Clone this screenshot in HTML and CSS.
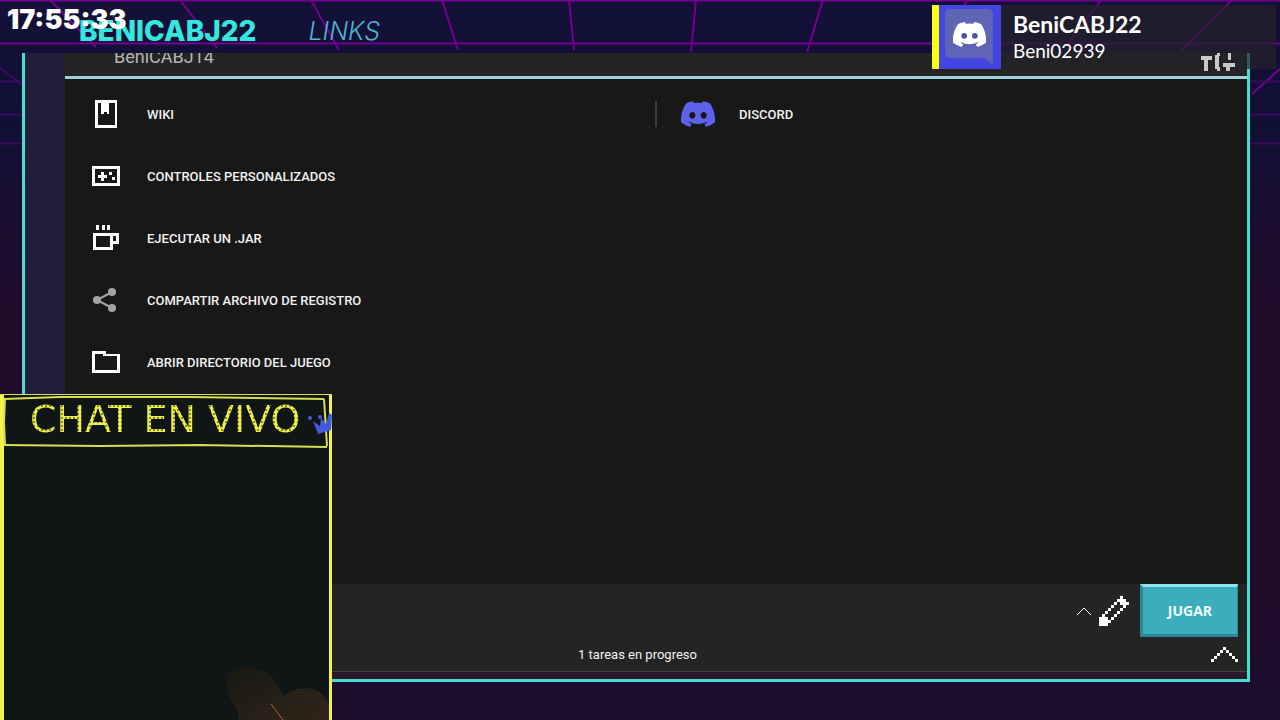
FILE: index.html
```html
<!DOCTYPE html>
<html lang="es">
<head>
    <meta charset="UTF-8">
    <meta name="viewport" content="width=device-width, initial-scale=1.0">
    <title>BeniCABJ22</title>
    <link rel="stylesheet" href="styles.css">
</head>
<body>
    <svg class="grid-lines" viewBox="0 0 1280 720" preserveAspectRatio="none" aria-hidden="true">
        <g class="grid-near">
            <path d="M0 0.5H1280M0 43.5H1280"/>
            <path d="M50 0L96 47M180 0L217 48M311 0L339 50M442 0L458 50M569 0L574 50M696 0L691 52M823 0L807 52M968 0L945 30M1101 0L1066 46M1232 0L1181 51"/>
            <path d="M1252 94L1280 69"/>
        </g>
        <g class="grid-far">
            <path d="M0 81.5H24M0 114.5H24M0 143.5H24M0 68L24 86M1248 81.5H1280M1248 114.5H1280M1248 143.5H1280"/>
        </g>
    </svg>

    <header class="topbar">
        <span class="brand">BENICABJ22</span>
        <a class="links" href="#">LINKS</a>
        <time class="clock">17:55:33</time>
    </header>

    <main class="frame">
        <div class="side"></div>
        <div class="launcher">
            <div class="account">
                <span class="account-name">BeniCABJ14</span>
                <button class="icon-button settings" type="button" aria-label="Ajustes">
                    <svg width="36" height="20" viewBox="0 0 36 20" fill="#c8c8c8">
                        <path d="M1 3h11v4h-4v11h-4v-11h-3zM15 2h2v-2h3v3h-1v11h1v4h-3v-2h-2zM28 0h3v7h-3zM23 10h12v4h-5v4h-4v-4h-3z"/>
                    </svg>
                </button>
            </div>

            <nav class="menu">
                <div class="menu-column">
                    <a class="menu-item" href="#">
                        <svg width="28" height="28" viewBox="0 0 28 28" fill="#fff">
                            <path fill-rule="evenodd" d="M3 0h22v28H3zM6 3v22h17V3h-6v11h-2v-2h-3v2H9V3z"/>
                        </svg>
                        WIKI
                    </a>
                    <a class="menu-item" href="#">
                        <svg width="28" height="28" viewBox="0 0 28 28" fill="#fff">
                            <path fill-rule="evenodd" d="M0 4h28v20H0zM3 7v14h22V7z"/>
                            <path d="M9 10h3v3h3v3h-3v3H9v-3H6v-3h3zM17 10h3v3h-3zM20 15h3v3h-3z"/>
                        </svg>
                        CONTROLES PERSONALIZADOS
                    </a>
                    <a class="menu-item" href="#">
                        <svg width="28" height="28" viewBox="0 0 28 28" fill="#fff">
                            <path d="M4 1h3v5H4zM10 1h3v5h-3zM15 1h3v5h-3z"/>
                            <path fill-rule="evenodd" d="M1 9h26v11h-6v6H1zM4 12v11h14V12zM21 12v5h3v-5z"/>
                        </svg>
                        EJECUTAR UN .JAR
                    </a>
                    <a class="menu-item" href="#">
                        <svg width="28" height="28" viewBox="0 0 28 28" fill="#a3a3a3">
                            <path d="M20 6L5 14L20 22" fill="none" stroke="#a3a3a3" stroke-width="2"/>
                            <circle cx="20" cy="6" r="4"/>
                            <circle cx="5" cy="14" r="4"/>
                            <circle cx="20" cy="22" r="4"/>
                        </svg>
                        COMPARTIR ARCHIVO DE REGISTRO
                    </a>
                    <a class="menu-item" href="#">
                        <svg width="28" height="28" viewBox="0 0 28 28" fill="#fff">
                            <path fill-rule="evenodd" d="M0 3h14v3h14v19H0zM3 6v16h22V8H11V6z"/>
                        </svg>
                        ABRIR DIRECTORIO DEL JUEGO
                    </a>
                </div>
                <div class="menu-column second">
                    <a class="menu-item" href="#">
                        <svg width="34" height="26" viewBox="0 0 127 96" fill="#5d62ea">
                            <path d="M107.7 8.1A105 105 0 0 0 81.5 0a72 72 0 0 0-3.4 6.8 97.7 97.7 0 0 0-29.1 0A72 72 0 0 0 45.6 0 105.9 105.9 0 0 0 19.4 8.1C2.8 32.7-1.7 56.6.5 80.2a105.7 105.7 0 0 0 32.2 16.2 77.7 77.7 0 0 0 6.9-11.2 68.4 68.4 0 0 1-10.9-5.2c.9-.7 1.8-1.4 2.7-2a75.6 75.6 0 0 0 64.3 0c.9.7 1.8 1.4 2.7 2a68.7 68.7 0 0 1-10.9 5.2 77 77 0 0 0 6.9 11.2 105.3 105.3 0 0 0 32.2-16.2c2.6-27.3-4.6-51-18.9-72.1zM42.5 65.7c-6.3 0-11.5-5.7-11.5-12.7s5-12.7 11.5-12.7S54 46 53.9 53s-5.1 12.7-11.4 12.7zm42.2 0c-6.3 0-11.4-5.7-11.4-12.7s5-12.7 11.4-12.7S96.3 46 96.2 53s-5.1 12.7-11.5 12.7z"/>
                        </svg>
                        DISCORD
                    </a>
                </div>
            </nav>

            <footer class="bottom">
                <div class="actions">
                    <button class="icon-button" type="button" aria-label="Elegir perfil">
                        <svg width="14" height="10" viewBox="0 0 14 10" fill="none" stroke="#fff">
                            <path d="M0 9L7 2L14 9"/>
                        </svg>
                    </button>
                    <button class="icon-button" type="button" aria-label="Editar perfil">
                        <svg width="30" height="30" viewBox="0 0 10 10" fill="#fff" shape-rendering="crispEdges">
                            <path d="M0 7h3v1h1v1H3v1H0zM1 6h1v1H1zM2 5h1v1H2zM3 4h1v1H3zM4 3h1v1H4zM5 2h1v1H5z"/>
                            <path d="M4 7h1v1H4zM5 6h1v1H5zM6 5h1v1H6zM7 4h1v1H7z"/>
                            <path d="M6 1h1V0h1v1h1v1h1v1H9v1H8V3H7V2H6z"/>
                        </svg>
                    </button>
                    <button class="play" type="button">JUGAR</button>
                </div>
                <div class="progress">
                    <span>1 tareas en progreso</span>
                    <button class="icon-button expand" type="button" aria-label="Ver tareas">
                        <svg width="27" height="15" viewBox="0 0 9 5" fill="#fff" shape-rendering="crispEdges">
                            <path d="M0 4h1v1H0zM1 3h1v1H1zM2 2h1v1H2zM3 1h1v1H3zM4 0h1v1H4zM5 1h1v1H5zM6 2h1v1H6zM7 3h1v1H7zM8 4h1v1H8z"/>
                        </svg>
                    </button>
                </div>
            </footer>
        </div>
    </main>

    <!-- Social alert, over the top right corner -->
    <aside class="social">
        <div class="social-logo">
            <svg width="50" height="56" viewBox="0 0 50 56">
                <path d="M5 0h38q5 0 5 5v51l-9-7H5q-5 0-5-5V5q0-5 5-5z" fill="#6064b4"/>
                <g transform="translate(8 13) scale(.26)" fill="#fff">
                    <path d="M107.7 8.1A105 105 0 0 0 81.5 0l-3.4 6.8a97.7 97.7 0 0 0-29.1 0L45.6 0A105.9 105.9 0 0 0 19.4 8.1C2.8 32.7-1.7 56.6.5 80.2a105.7 105.7 0 0 0 32.2 16.2l6.9-11.2-10.9-5.2 2.7-2a75.6 75.6 0 0 0 64.3 0l2.7 2-10.9 5.2 6.9 11.2a105.3 105.3 0 0 0 32.2-16.2c2.6-27.3-4.6-51-18.9-72.1z"/>
                    <circle cx="43" cy="53" r="11" fill="#5054a8"/>
                    <circle cx="84" cy="53" r="11" fill="#5054a8"/>
                </g>
            </svg>
        </div>
        <div class="social-text">
            <strong>BeniCABJ22</strong>
            <span>Beni02939</span>
        </div>
    </aside>

    <!-- Live chat box, over the bottom left corner -->
    <section class="chat">
        <div class="chat-head">
            <svg class="chat-outline" viewBox="0 0 332 56" preserveAspectRatio="none" fill="none" stroke="#d6df52">
                <path d="M0 0.5H332" stroke-width="1"/>
                <path d="M4 5L60 3L190 3L324 5" stroke-width="2"/>
                <path d="M5 4L4 28L5 52M324 5L327 52" stroke-width="2"/>
                <path d="M4 51L100 52L200 51L327 53" stroke-width="2"/>
            </svg>
            <h2>CHAT EN VIVO</h2>
            <svg class="crown" width="24" height="22" viewBox="0 0 24 22" fill="#4159df">
                <path d="M5 8L10 21L23 17L24 2L21 0L18 11L13 5L12 13z"/>
                <circle cx="2" cy="5" r="2"/>
                <circle cx="12" cy="4" r="2"/>
            </svg>
        </div>
        <div class="chat-body">
            <svg width="104" height="54" viewBox="0 0 104 54">
                <defs>
                    <pattern id="weave" width="3" height="3" patternUnits="userSpaceOnUse">
                        <path d="M0 0h1v1H0zM2 2h1v1H2z" fill="#4b3720"/>
                    </pattern>
                    <linearGradient id="fade" x1="0" y1="0" x2="1" y2="1">
                        <stop offset="0" stop-color="#141612"/>
                        <stop offset="1" stop-color="#2e2419"/>
                    </linearGradient>
                </defs>
                <path d="M14 54C12 38 0 28 1 16C3 4 12 0 24 1C44 3 51 16 59 30C65 25 69 23 78 22C91 21 100 29 104 38V54z" fill="url(#fade)"/>
                <path d="M14 54C12 38 0 28 1 16C3 4 12 0 24 1C44 3 51 16 59 30C65 25 69 23 78 22C91 21 100 29 104 38V54z" fill="url(#weave)" opacity=".3"/>
                <path d="M46 38L58 54" stroke="#a9653a" fill="none"/>
            </svg>
        </div>
    </section>
</body>
</html>
```
FILE: styles.css
```css
* {
    box-sizing: border-box;
}
body {
    margin: 0;
    min-height: 100vh;
    display: flex;
    flex-direction: column;
    position: relative;
    overflow: hidden;
    color: #f2f2f2;
    font-family: Roboto, sans-serif;
    background: linear-gradient(#131137 0%, #120f37 18%, #1a0e30 30%, #210b28 45%, #210b28 80%, #1c0c2e 96%);
}
a {
    color: inherit;
    text-decoration: none;
}
button {
    border: none;
    cursor: pointer;
}
.grid-lines {
    position: absolute;
    inset: 0;
    width: 100%;
    height: 100%;
    z-index: -1;
    fill: none;
    stroke-width: 2;
}
.grid-near {
    stroke: #740091;
}
.grid-far {
    stroke: #3c0a5c;
}

/* Top bar */
.topbar {
    display: flex;
    align-items: center;
    gap: 52px;
    height: 53px;
    padding: 8px 79px 0;
}
.brand {
    color: #35e8df;
    font: 800 28px/40px Inter, sans-serif;
}
.links {
    color: #4fb6cf;
    font: italic 300 25px/40px Inter, sans-serif;
}
.clock {
    position: absolute;
    top: 4px;
    left: 7px;
    color: #fff;
    font: 900 27px/32px Inter, sans-serif;
}

/* Launcher window */
.frame {
    flex: 1;
    display: flex;
    margin: 0 30px 38px 22px;
    border: 3px solid #47ddd0;
    border-top: none;
    background: #181818;
}
.side {
    width: 40px;
    background: #211d3b;
}
.launcher {
    flex: 1;
    display: flex;
    flex-direction: column;
}
.account {
    display: flex;
    justify-content: space-between;
    height: 26px;
    padding: 0 11px 0 49px;
    overflow: hidden;
    background: #242424;
    border-bottom: 3px solid #9bd0dc;
}
.account-name {
    margin-top: -8px;
    color: #b5b5b5;
    font-size: 18px;
    line-height: 24px;
}
.icon-button {
    display: flex;
    padding: 0;
    background: none;
}
.settings {
    position: relative;
    z-index: 1;
}
.menu {
    flex: 1;
    display: grid;
    grid-template-columns: 1fr 1fr;
    padding: 4px 2px 0 0;
}
.menu-item {
    display: flex;
    align-items: center;
    gap: 27px;
    height: 62px;
    padding-left: 27px;
    font-size: 13px;
    font-weight: 500;
}
.second .menu-item {
    gap: 24px;
    height: 26px;
    margin-top: 18px;
    padding-left: 24px;
    border-left: 2px solid #3d3d3d;
}
.bottom {
    background: #242424;
    border-bottom: 7px solid #2b1a2e;
}
.actions {
    display: flex;
    align-items: center;
    justify-content: flex-end;
    gap: 8px;
    padding-right: 9px;
}
.play {
    width: 98px;
    height: 53px;
    margin-left: 3px;
    color: #f0ffff;
    background: #3badbd;
    border: solid #2f8794;
    border-width: 3px 1px 3px 3px;
    border-top-color: #8de2ec;
    font: 700 14px/20px "Open Sans", sans-serif;
}
.progress {
    display: grid;
    grid-template-columns: 1fr auto 1fr;
    align-items: center;
    height: 35px;
    padding-right: 9px;
    border-bottom: 1px solid #444;
    font-size: 13px;
}
.progress span {
    grid-column: 2;
    margin-right: 28px;
}
.expand {
    justify-self: end;
}

/* Social alert */
.social {
    position: absolute;
    top: 5px;
    right: 4px;
    display: flex;
    width: 344px;
    height: 64px;
    background: rgba(36, 34, 42, 0.7);
    border-left: 7px solid #faff17;
}
.social-logo {
    padding: 4px 6px;
    width: 62px;
    background: #4345e2;
}
.social-text {
    display: flex;
    flex-direction: column;
    padding: 5px 12px;
    color: #fff;
    font-family: Lato, sans-serif;
    font-size: 23px;
    line-height: 28px;
}
.social-text span {
    font-size: 19px;
    line-height: 26px;
}

/* Live chat */
.chat {
    position: absolute;
    bottom: 0;
    left: 0;
    display: flex;
    flex-direction: column;
    width: 332px;
    height: 326px;
    background: #101515;
    border: solid #f2f44c;
    border-width: 0 3px 0 4px;
}
.chat-head {
    position: relative;
    height: 56px;
    padding-left: 26px;
}
.chat-outline {
    position: absolute;
    top: 0;
    left: -4px;
    width: 332px;
    height: 56px;
}
/* Lettering made of small round lamps */
.chat h2 {
    margin: 0;
    color: transparent;
    background: radial-gradient(circle, #f0f24c 55%, #55591f 85%) 0 0 / 4px 4px;
    -webkit-background-clip: text;
    background-clip: text;
    font: 400 38px/50px "DejaVu Sans", sans-serif;
    white-space: nowrap;
}
.crown {
    position: absolute;
    top: 19px;
    right: -3px;
}
.chat-body {
    flex: 1;
    display: flex;
    align-items: flex-end;
    justify-content: flex-end;
}
.chat-body svg {
    display: block;
}
```
